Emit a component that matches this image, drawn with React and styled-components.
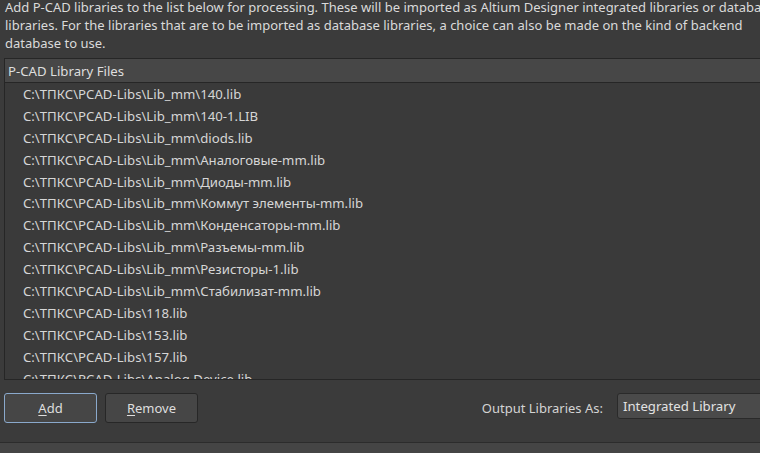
import React from 'react'
import styled, { createGlobalStyle } from 'styled-components'

const GlobalStyle = createGlobalStyle`
  html, body {
    margin: 0;
    padding: 0;
    background: #3b3b3b;
    overflow: hidden;
  }
  body {
    font-family: 'Noto Sans', 'Open Sans', sans-serif;
    font-size: 13px;
    color: #d9d9d9;
  }
`

const Page = styled.div`
  width: 800px;
  height: 453px;
  display: flex;
  flex-direction: column;
  background: #3b3b3b;
`

const Intro = styled.p`
  margin: -2px 0 0 0;
  padding: 0 0 0 5px;
  line-height: 18px;
  height: 60px;
  white-space: nowrap;
  color: #dadada;
`

const ListBox = styled.div`
  margin-left: 4px;
  height: 320px;
  border: 1px solid #262626;
  border-right: none;
  background: #3a3a3a;
  overflow: hidden;
  display: flex;
  flex-direction: column;
  font-size: 13.2px;
`

const Header = styled.div`
  height: 23px;
  flex-shrink: 0;
  display: flex;
  align-items: center;
  padding-left: 3px;
  background: #474747;
  border-bottom: 1px solid #262626;
  color: #dedede;
`

const Row = styled.div`
  height: 21.9px;
  flex-shrink: 0;
  display: flex;
  align-items: center;
  padding-left: 18px;
  white-space: nowrap;
  color: #d6d6d6;
`

const Toolbar = styled.div`
  height: 62px;
  display: flex;
  align-items: center;
  padding: 0 0 6px 4px;
  box-sizing: border-box;
  gap: 8px;
`

const Button = styled.button`
  width: 93px;
  height: 30px;
  box-sizing: border-box;
  border-radius: 3px;
  border: 1px solid ${p => (p.$focused ? '#8aa9cc' : '#272727')};
  background: #464646;
  color: #dedede;
  font: inherit;
  padding: 0;
  u { text-decoration-thickness: 1px; text-underline-offset: 2px; }
`

const Spacer = styled.div`
  flex: 1;
`

const Label = styled.span`
  color: #d4d4d4;
  margin-right: 6px;
`

const Combo = styled.div`
  width: 200px;
  height: 26px;
  box-sizing: border-box;
  display: flex;
  align-items: center;
  padding-left: 5px;
  border: 1px solid #2a2a2a;
  border-radius: 3px;
  background: #4a4a4a;
  color: #e2e2e2;
  font-size: 13.2px;
  margin-top: -4px;
  margin-right: -17px;
`

const Footer = styled.div`
  flex: 1;
  background: #454545;
  border-top: 1px solid #2c2c2c;
`

const files = [
  'C:\\ТПКС\\PCAD-Libs\\Lib_mm\\140.lib',
  'C:\\ТПКС\\PCAD-Libs\\Lib_mm\\140-1.LIB',
  'C:\\ТПКС\\PCAD-Libs\\Lib_mm\\diods.lib',
  'C:\\ТПКС\\PCAD-Libs\\Lib_mm\\Аналоговые-mm.lib',
  'C:\\ТПКС\\PCAD-Libs\\Lib_mm\\Диоды-mm.lib',
  'C:\\ТПКС\\PCAD-Libs\\Lib_mm\\Коммут элементы-mm.lib',
  'C:\\ТПКС\\PCAD-Libs\\Lib_mm\\Конденсаторы-mm.lib',
  'C:\\ТПКС\\PCAD-Libs\\Lib_mm\\Разъемы-mm.lib',
  'C:\\ТПКС\\PCAD-Libs\\Lib_mm\\Резисторы-1.lib',
  'C:\\ТПКС\\PCAD-Libs\\Lib_mm\\Стабилизат-mm.lib',
  'C:\\ТПКС\\PCAD-Libs\\118.lib',
  'C:\\ТПКС\\PCAD-Libs\\153.lib',
  'C:\\ТПКС\\PCAD-Libs\\157.lib',
  'C:\\ТПКС\\PCAD-Libs\\Analog Device.lib',
]

const App = () => {
  return (
    <Page>
      <GlobalStyle />
      <Intro>
        Add P-CAD libraries to the list below for processing. These will be imported as Altium Designer integrated libraries or database
        <br />
        libraries. For the libraries that are to be imported as database libraries, a choice can also be made on the kind of backend
        <br />
        database to use.
      </Intro>
      <ListBox>
        <Header>P-CAD Library Files</Header>
        {files.map(f => (
          <Row key={f}>{f}</Row>
        ))}
      </ListBox>
      <Toolbar>
        <Button $focused>
          <u>A</u>dd
        </Button>
        <Button>
          <u>R</u>emove
        </Button>
        <Spacer />
        <Label>Output Libraries As:</Label>
        <Combo>Integrated Library</Combo>
      </Toolbar>
      <Footer />
    </Page>
  )
}

export default App
